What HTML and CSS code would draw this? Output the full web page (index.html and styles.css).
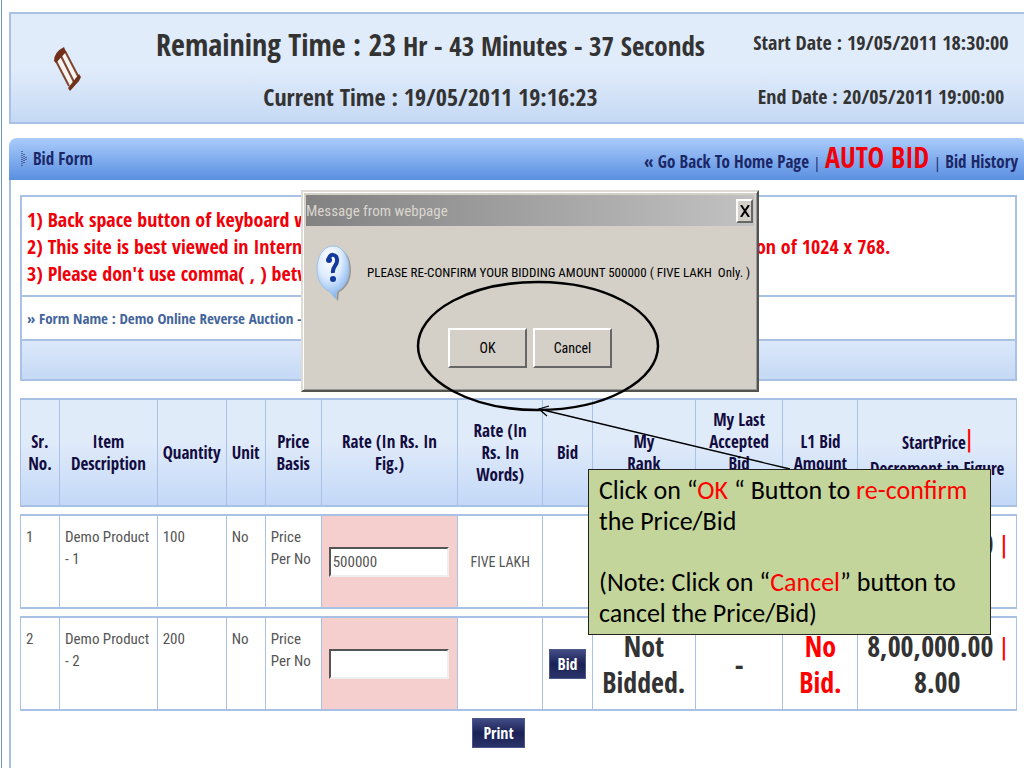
FILE: index.html
```
<!DOCTYPE html>
<html lang="en">
<head>
    <meta charset="UTF-8">
    <meta name="viewport" content="width=device-width, initial-scale=1.0">
    <title>Bid Form</title>
    <link rel="stylesheet" href="styles.css">
</head>
<body>
<div class="page">
    <header class="timer">
        <svg class="hourglass" viewBox="0 0 30 48" aria-hidden="true">
            <path d="M3 14L13 4L27 31L17 42Z" fill="#f7f3f1"/>
            <path d="M4 16L17 41M9 11L22 37M13 6L26 31" stroke="#7d452f" stroke-width="2" fill="none"/>
            <path d="M2 16Q2 7 12 2L14 7L4 18Z" fill="#70301a"/>
            <path d="M16 43L27 29L29 32L27 36L18 46Z" fill="#70301a"/>
        </svg>
        <div class="clock">
            <p class="remaining"><strong>Remaining Time : 23</strong> Hr - 43 Minutes - 37 Seconds</p>
            <p class="current">Current Time : 19/05/2011 19:16:23</p>
        </div>
        <div class="dates">
            <p>Start Date : 19/05/2011 18:30:00</p>
            <p>End Date : 20/05/2011 19:00:00</p>
        </div>
    </header>

    <main class="panel">
        <div class="panel-bar">
            <svg class="bullet" viewBox="0 0 6 16" aria-hidden="true">
                <path d="M1 0V16M3 3V13M5 6V10" stroke="#16204c" stroke-dasharray="1 1"/>
            </svg>
            <h1>Bid Form</h1>
            <nav>
                <a href="#">« Go Back To Home Page</a> | <a class="auto-bid" href="#">AUTO BID</a> | <a href="#">Bid History</a>
            </nav>
        </div>

        <div class="panel-body">
            <section class="notes">
                <div class="rules">
                    <p>1) Back space button of keyboard would not work.</p>
                    <p>2) This site is best viewed in Internet Explorer version 6.0 and above with the screen resolution of 1024 x 768.</p>
                    <p>3) Please don't use comma( , ) between the figures.</p>
                </div>
                <h2 class="form-name">» Form Name : Demo Online Reverse Auction - 1</h2>
                <div class="strip"></div>
            </section>

            <table class="bids">
                <colgroup>
                    <col class="col-sr">
                    <col class="col-item">
                    <col class="col-qty">
                    <col class="col-unit">
                    <col class="col-basis">
                    <col class="col-rate">
                    <col class="col-words">
                    <col class="col-bid">
                    <col class="col-rank">
                    <col class="col-last">
                    <col class="col-l1">
                    <col class="col-start">
                </colgroup>
                <thead>
                    <tr>
                        <th>Sr. No.</th>
                        <th>Item Description</th>
                        <th>Quantity</th>
                        <th>Unit</th>
                        <th>Price Basis</th>
                        <th>Rate (In Rs. In<br>Fig.)</th>
                        <th>Rate (In<br>Rs. In<br>Words)</th>
                        <th>Bid</th>
                        <th>My<br>Rank</th>
                        <th>My Last<br>Accepted<br>Bid<br>Price</th>
                        <th>L1 Bid Amount</th>
                        <th class="start">StartPrice<span class="bar">|</span><br>Decrement in Figure</th>
                    </tr>
                </thead>
                <tbody>
                    <tr>
                        <td>1</td>
                        <td>Demo Product<br>- 1</td>
                        <td>100</td>
                        <td>No</td>
                        <td>Price Per No</td>
                        <td class="rate"><input type="text" value="500000" aria-label="Rate for Demo Product - 1"></td>
                        <td class="words">FIVE LAKH</td>
                        <td class="big"></td>
                        <td class="big"></td>
                        <td class="big"></td>
                        <td class="big"></td>
                        <td class="big">8,00,000.00 <span class="bar">|</span><br>8.00</td>
                    </tr>
                    <tr>
                        <td>2</td>
                        <td>Demo Product<br>- 2</td>
                        <td>200</td>
                        <td>No</td>
                        <td>Price Per No</td>
                        <td class="rate"><input type="text" aria-label="Rate for Demo Product - 2"></td>
                        <td class="words"></td>
                        <td class="action"><button class="navy" type="button">Bid</button></td>
                        <td class="big">Not<br>Bidded.</td>
                        <td class="big">-</td>
                        <td class="big red">No<br>Bid.</td>
                        <td class="big">8,00,000.00 <span class="bar">|</span><br>8.00</td>
                    </tr>
                </tbody>
            </table>

            <div class="footer-actions">
                <button class="navy" type="button">Print</button>
            </div>
        </div>
    </main>
</div>

<div class="dialog" role="dialog" aria-labelledby="dialog-title">
    <div class="dialog-title">
        <span id="dialog-title">Message from webpage</span>
        <button class="close" type="button" aria-label="Close">
            <svg viewBox="0 0 10 12" aria-hidden="true"><path d="M1 0L9 12M9 0L1 12" stroke="#000" stroke-width="2"/></svg>
        </button>
    </div>
    <div class="dialog-message">
        <svg class="question" viewBox="0 0 36 56" aria-hidden="true">
            <defs>
                <radialGradient id="bubble" cx="40%" cy="25%" r="75%">
                    <stop offset="0" stop-color="#fff"/>
                    <stop offset="0.5" stop-color="#dcebfd"/>
                    <stop offset="1" stop-color="#7fb0ee"/>
                </radialGradient>
            </defs>
            <path d="M19 3C29 3 35 13 35 25C35 36 30 44 23 47L22 56L15 47C7 45 3 36 3 25C3 13 9 3 19 3Z" fill="#9a978f"/>
            <path d="M17 1C27 1 33 12 33 24C33 35 28 43 21 46L20 54L13 46C6 43 1 35 1 24C1 12 7 1 17 1Z" fill="url(#bubble)" stroke="#9fc0ea"/>
            <path d="M13 15C12 8 22 8 21 16C21 21 16 21 17 28" fill="none" stroke="#123a9c" stroke-width="4"/>
            <circle cx="13" cy="15" r="3" fill="#123a9c"/>
            <ellipse cx="17" cy="34" rx="3" ry="3" fill="#123a9c"/>
        </svg>
        <p>PLEASE RE-CONFIRM YOUR BIDDING AMOUNT 500000 ( FIVE LAKH&nbsp; Only. )</p>
    </div>
    <div class="dialog-buttons">
        <button type="button">OK</button>
        <button type="button">Cancel</button>
    </div>
</div>

<svg class="marker" viewBox="0 0 380 200" aria-hidden="true">
    <ellipse cx="122" cy="66" rx="120" ry="64" fill="none" stroke="#000" stroke-width="2.5"/>
    <path d="M374 189L123 129M133 126L123 129L131 136" fill="none" stroke="#000" stroke-width="1.3"/>
</svg>

<aside class="callout">
    <p>Click on “<em>OK</em> “ Button to <em>re-confirm</em> the Price/Bid</p>
    <p>(Note: Click on “<em>Cancel</em>” button to cancel the Price/Bid)</p>
</aside>
</body>
</html>
```
FILE: styles.css
```
:root {
    --line: #a9c1e4;
    --red: #f00008;
    --font-page: "Open Sans Condensed", "Roboto Condensed", "Open Sans", sans-serif;
    --font-plain: "Roboto Condensed", "Open Sans", sans-serif;
}

* {
    box-sizing: border-box;
}

body {
    position: relative;
    min-height: 100vh;
    margin: 0;
    background: #fff;
    color: #333;
    font-family: var(--font-page);
    font-size: 16px;
    line-height: 22px;
}

h1, h2, p {
    margin: 0;
}

.page {
    display: flex;
    flex-direction: column;
    gap: 14px;
    min-height: 100vh;
    margin-left: 1px;
    padding: 12px 0 0 7px;
    border-left: 1px solid #6f97cf;
}

.timer {
    display: grid;
    grid-template-columns: 112px 1fr 286px;
    align-items: center;
    height: 112px;
    border: 2px solid var(--line);
    border-right: 0;
    background: linear-gradient(#e1ecfb 50%, #c5d9f4);
    font-weight: bold;
    text-align: center;
    white-space: nowrap;
}

.hourglass {
    width: 30px;
    height: 48px;
    justify-self: center;
}

.clock {
    padding-top: 2px;
    font-size: 27px;
    line-height: 51px;
}

.remaining strong {
    font-size: 30px;
}

.current {
    font-size: 24px;
}

.dates {
    padding-top: 2px;
    font-size: 20px;
    line-height: 54px;
}

.panel {
    flex: 1;
    display: flex;
    flex-direction: column;
}

.panel-bar {
    display: flex;
    align-items: center;
    height: 42px;
    padding: 0 6px 0 12px;
    border-radius: 8px 4px 0 0;
    background: linear-gradient(#aaccfb, #5a8fe1);
    color: #1b2766;
}

.panel-bar nav {
    margin-left: auto;
    font-family: "Open Sans", sans-serif;
    font-size: 15px;
}

.panel-bar a {
    color: inherit;
    font-family: var(--font-page);
    font-size: 17px;
    font-weight: bold;
    text-decoration: none;
}

.panel-bar .auto-bid {
    color: var(--red);
    font-size: 28px;
}

.panel-bar h1 {
    font-size: 17px;
}

.bullet {
    width: 6px;
    height: 16px;
    margin-right: 6px;
}

.panel-body {
    flex: 1;
    padding: 15px 7px 0 9px;
    border-left: 2px solid var(--line);
}

.notes {
    border: 2px solid var(--line);
}

.rules {
    padding: 9px 5px 8px;
    color: var(--red);
    font-size: 20px;
    font-weight: bold;
    line-height: 27px;
    white-space: nowrap;
}

.form-name {
    padding: 10px 5px;
    border: solid var(--line);
    border-width: 2px 0;
    color: #44659c;
    font-size: 15px;
    line-height: 22px;
}

.strip {
    height: 38px;
    background: linear-gradient(#dbe8fa, #c5d9f5);
}

.bids {
    width: 100%;
    margin-top: 10px;
    border-spacing: 0 7px;
    table-layout: fixed;
}

.col-sr {
    width: 40px;
}

.col-item {
    width: 9.8%;
}

.col-qty {
    width: 69px;
}

.col-unit {
    width: 39px;
}

.col-basis {
    width: 56px;
}

.col-rate {
    width: 13.7%;
}

.col-words {
    width: 8.5%;
}

.col-bid {
    width: 50px;
}

.col-rank {
    width: 10.3%;
}

.col-last {
    width: 8.8%;
}

.col-l1 {
    width: 75px;
}

.bids th,
.bids td {
    padding: 10px 5px;
    border: 2px solid var(--line);
    border-width: 2px 1px 2px 0;
}

.bids th:first-child,
.bids td:first-child {
    border-left-width: 1px;
}

.bids th {
    height: 109px;
    padding: 0 2px;
    background: linear-gradient(#e0ebfa 40%, #c3d8f7);
    color: #120c40;
    font-size: 17px;
}

.bids .start {
    padding-top: 6px;
    line-height: 26px;
}

.bids td {
    height: 95px;
    color: #555;
    font-family: var(--font-plain);
    font-size: 15px;
    vertical-align: top;
}

.bids .rate {
    background: #f5cece;
    vertical-align: middle;
}

.bids input {
    display: block;
    width: 96%;
    height: 30px;
    margin-left: 2px;
    padding: 0 2px;
    border: 2px solid;
    border-color: #555 #eee #eee #555;
    background: #fff;
    color: #555;
    font: inherit;
}

.bids .words,
.bids .action,
.bids .big {
    padding: 0 2px;
    text-align: center;
    vertical-align: middle;
}

.bids .words {
    font-size: 14px;
}

.bids .big {
    color: #333;
    font-family: var(--font-page);
    font-size: 28px;
    font-weight: bold;
    line-height: 36px;
    white-space: nowrap;
}

.bids .big.red,
.bids .bar {
    color: #f00;
}

.bids .bar {
    font-family: var(--font-plain);
    font-size: 28px;
    font-weight: normal;
    line-height: 22px;
}

.navy {
    height: 30px;
    padding: 0 8px;
    border: 1px solid #4d5688;
    background: linear-gradient(#424c85, #1a2156 50%, #2a3369);
    color: #fff;
    font: bold 16px var(--font-page);
}

.footer-actions {
    padding-right: 40px;
    text-align: center;
}

.footer-actions .navy {
    padding: 0 10px;
}

.dialog {
    position: absolute;
    top: 190px;
    left: 301px;
    width: 458px;
    height: 202px;
    padding: 3px;
    border: 2px solid;
    border-color: #dedbd5 #55534f #55534f #dedbd5;
    background: #d4d0c8;
    box-shadow: inset 1px 1px #fff, inset -1px -1px #999;
    color: #000;
    font-family: var(--font-plain);
}

.dialog-title {
    display: flex;
    align-items: center;
    justify-content: space-between;
    height: 31px;
    padding-right: 1px;
    background: linear-gradient(90deg, #828282, #c2c2c2);
    color: #dad6ce;
    font-size: 15px;
}

.dialog button {
    border: 2px solid;
    border-color: #fff #666 #666 #fff;
    background: #d4d0c8;
    color: #000;
    font: 14px var(--font-plain);
}

.dialog .close {
    display: grid;
    place-items: center;
    width: 17px;
    height: 24px;
    padding: 0;
}

.close svg {
    width: 10px;
    height: 12px;
}

.dialog-message {
    display: flex;
    align-items: center;
    gap: 15px;
    padding: 19px 5px 27px 10px;
    font-size: 13px;
    white-space: nowrap;
}

.question {
    flex: none;
    width: 36px;
    height: 56px;
}

.dialog-buttons {
    display: flex;
    justify-content: center;
    gap: 6px;
}

.dialog-buttons button {
    width: 79px;
    height: 40px;
}

.marker {
    position: absolute;
    top: 280px;
    left: 416px;
    width: 380px;
    height: 200px;
    pointer-events: none;
}

.callout {
    position: absolute;
    top: 469px;
    left: 588px;
    width: 403px;
    padding: 5px 10px;
    border: 1px solid #222;
    background: #c4d59b;
    color: #000;
    font-family: Carlito, "Open Sans", sans-serif;
    font-size: 26px;
    line-height: 31px;
}

.callout p + p {
    margin-top: 30px;
}

.callout em {
    color: #f00;
    font-style: normal;
}
```
